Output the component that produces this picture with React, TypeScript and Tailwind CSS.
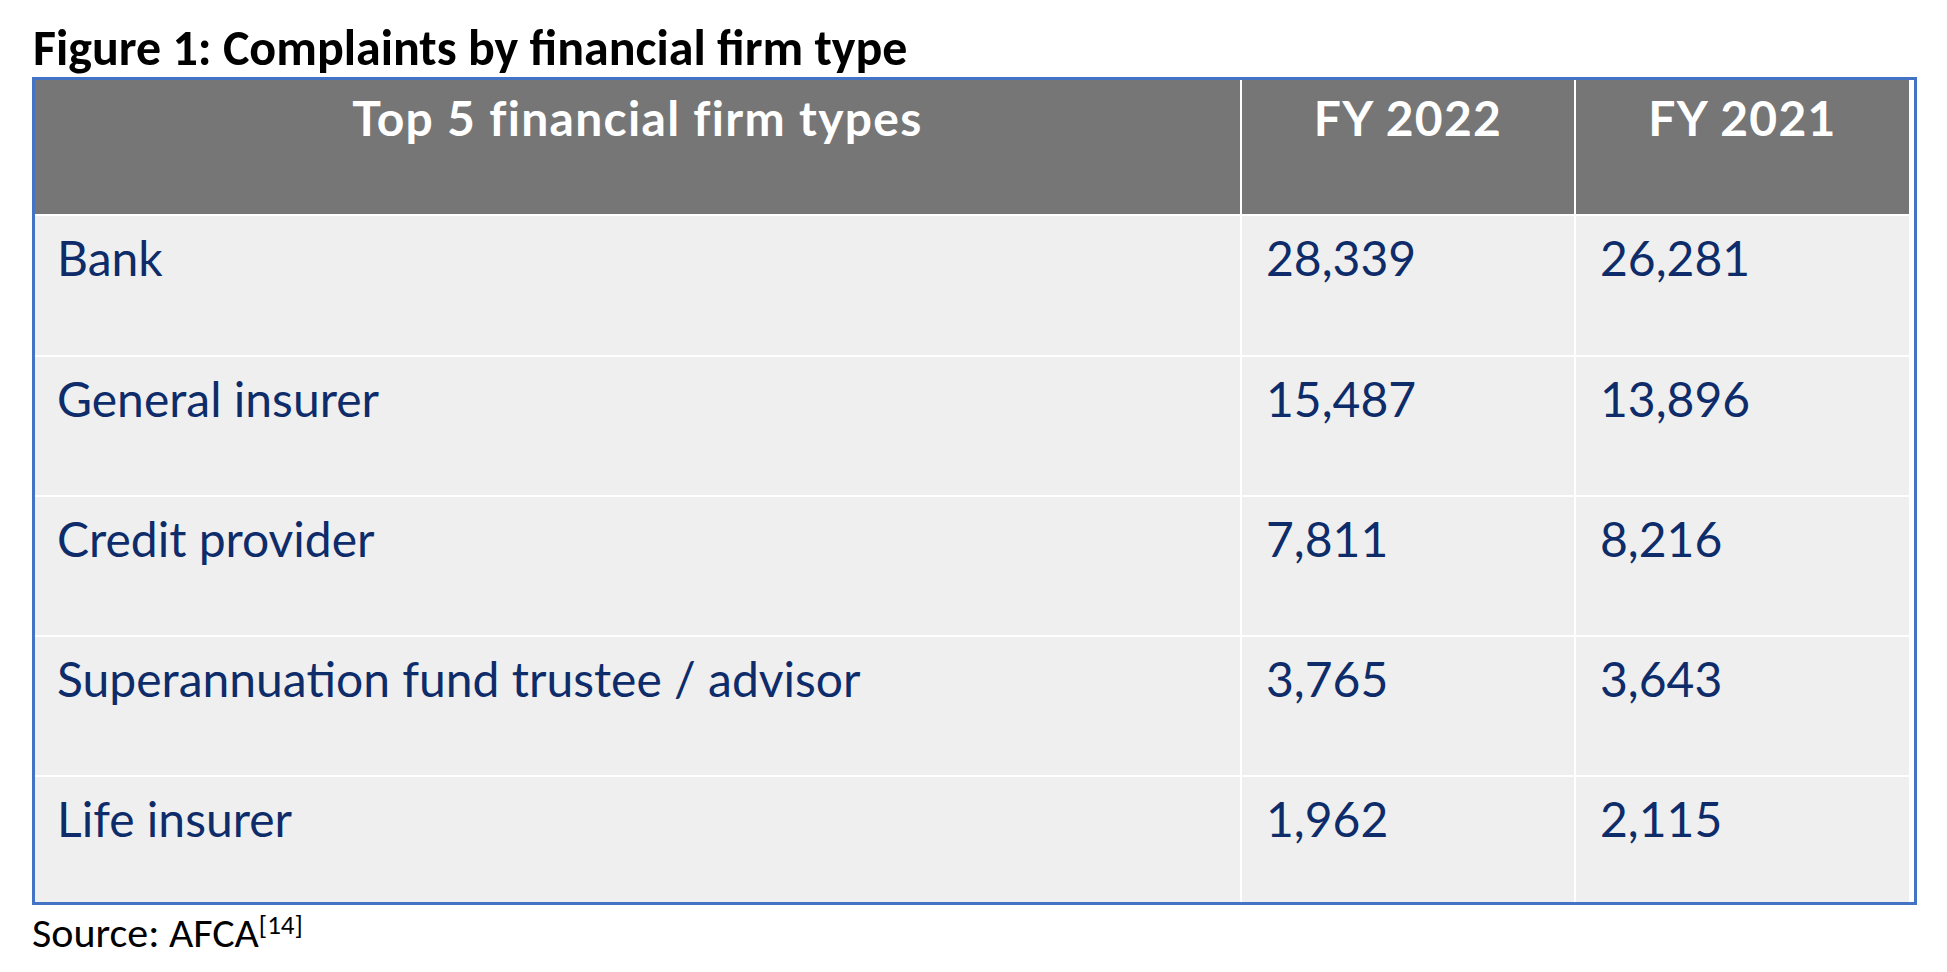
const rows = [
  { name: "Bank", fy22: "28,339", fy21: "26,281", h: "h-[139px]" },
  { name: "General insurer", fy22: "15,487", fy21: "13,896", h: "h-[138px]" },
  { name: "Credit provider", fy22: "7,811", fy21: "8,216", h: "h-[138px]" },
  { name: "Superannuation fund trustee / advisor", fy22: "3,765", fy21: "3,643", h: "h-[138px]" },
  { name: "Life insurer", fy22: "1,962", fy21: "2,115", h: "h-[125px]" },
];

const calibri = "font-['Carlito','Calibri','Lato',sans-serif]";
const body = "font-['Lato','Noto_Sans',sans-serif]";
const headCell =
  "h-[134px] bg-[#767676] pt-[14px] text-center text-[48px] leading-none font-bold tracking-[1.3px] text-white";

export default function App() {
  return (
    <div className="w-[1947px] h-[972px] bg-white overflow-hidden">
      <h1 className={`${calibri} pl-[33px] pt-[23px] h-[77px] text-[50px] leading-none font-bold text-black`}>
        Figure 1: Complaints by financial firm type
      </h1>

      <div className="ml-[32px] w-[1885px] border-[3px] border-[#4472c4] bg-white">
        <div className={`${body} grid grid-cols-[1205px_332px_333px] gap-x-[2px] gap-y-[2px] pr-[5px]`}>
          <div className={headCell}>Top 5 financial firm types</div>
          <div className={headCell}>FY 2022</div>
          <div className={headCell}>FY 2021</div>

          {rows.map((r) => (
            <div key={r.name} className="contents">
              <div className={`${r.h} bg-[#efefef] pl-[22px] pt-[18px] text-[48px] leading-none text-[#0e2c6a]`}>
                {r.name}
              </div>
              <div className={`${r.h} bg-[#efefef] pl-[24px] pt-[18px] text-[48px] leading-none text-[#0e2c6a]`}>
                {r.fy22}
              </div>
              <div className={`${r.h} bg-[#efefef] pl-[24px] pt-[18px] text-[48px] leading-none text-[#0e2c6a]`}>
                {r.fy21}
              </div>
            </div>
          ))}
        </div>
      </div>

      <p className={`${calibri} pl-[32px] pt-[7px] text-[42px] leading-none text-black`}>
        Source: AFCA<sup className="text-[27px] leading-none">[14]</sup>
      </p>
    </div>
  );
}
